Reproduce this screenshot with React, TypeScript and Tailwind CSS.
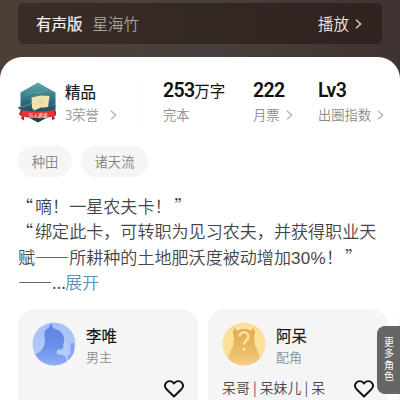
import type { ReactNode } from 'react';

function Chevron({ className = '' }: { className?: string }) {
  return (
    <svg viewBox="0 0 7 10" className={`h-[10px] w-[7px] shrink-0 ${className}`} fill="none" stroke="currentColor" strokeWidth="1.4">
      <path d="M1 .8 5.6 5 1 9.2" />
    </svg>
  );
}

function Heart() {
  return (
    <svg viewBox="0 0 20 18" className="h-[18px] w-5" fill="none" stroke="#111" strokeWidth="1.9" strokeLinejoin="round">
      <path d="M10 16.5 2.6 9.2C.8 7.2.6 4.6 2.1 2.8c2-2.4 5.9-2.2 7.9.7 2-2.9 5.9-3.1 7.9-.7 1.5 1.8 1.3 4.4-.5 6.4Z" />
    </svg>
  );
}

function Badge() {
  return (
    <svg viewBox="0 0 38 42" className="h-[42px] w-[38px] shrink-0">
      <defs>
        <linearGradient id="badge" x1="0" y1="0" x2="0" y2="1">
          <stop offset="0" stopColor="#62a7ae" />
          <stop offset=".5" stopColor="#286b7c" />
          <stop offset="1" stopColor="#123846" />
        </linearGradient>
      </defs>
      <path d="M20 .5 37.500 10.500v20.500L20 40.500 2.500 31V10.500Z" fill="url(#badge)" />
      <path d="M9 13c7-5 11 0 21-5M1 24c6 3 9-4 15-2M25 26c5-3 8 0 12-4" fill="none" stroke="#6ba5aa" strokeWidth=".8" />
      <path d="m13.500 15.500 9-2 9 .5-1.500 11-7 .5-7 3-2-3Z" fill="#efe2ad" />
      <path d="m19 22 3-3 2 1-1 2 3-1" fill="none" stroke="#d3c286" strokeWidth=".7" />
      <path d="M0 25l10 1-2 3-7-2M29 25l9-2-2 4" fill="#23586a" />
      <path d="m2 29.500 4-1v10l-3-2 1-2-3-2Zm36 0-4-1v10l3-2-1-2 3-2Z" fill="#b91f28" />
      <path d="M3.500 28Q20 31 36.500 28V34.500Q20 38 3.500 34.500Z" fill="#e63338" />
      <text x="20" y="34.500" textAnchor="middle" fontSize="4.800" fontWeight="700" fill="#ffd2c2">万人追读</text>
    </svg>
  );
}

function LeadAvatar() {
  return (
    <svg viewBox="0 0 44 44" className="size-11 shrink-0">
      <defs>
        <clipPath id="leadClip"><circle cx="22" cy="22" r="21.500" /></clipPath>
        <linearGradient id="leadBg" x1="0" y1="0" x2="0" y2="1"><stop stopColor="#a6bff5" /><stop offset="1" stopColor="#bdcefb" /></linearGradient>
        <linearGradient id="leadBody" gradientUnits="userSpaceOnUse" x1="0" y1="2" x2="0" y2="44"><stop stopColor="#5b83de" /><stop offset=".55" stopColor="#6990ea" /><stop offset="1" stopColor="#90aff7" /></linearGradient>
      </defs>
      <g clipPath="url(#leadClip)">
        <path d="M0 0h44v44H0Z" fill="url(#leadBg)" />
        <path d="M38.500 21H42v23h-6V33h2.500Z" fill="#81a2f0" />
        <path d="M13.500 8 17 5.500l2-4.500 2 5 6 2.500c3 2 5 5 5 8.500v4l-1 1 .5 3-2 2.500h-4l-1 2.500.5 2c3 1 6 1 8 2 2 2 2 6 2 10H0V33l6-2c5-3 7-8 7-13-1-4-1-7 .5-10Z" fill="url(#leadBody)" />
      </g>
    </svg>
  );
}

function SupportAvatar() {
  return (
    <svg viewBox="0 0 44 44" className="size-11 shrink-0">
      <defs>
        <clipPath id="supportClip"><circle cx="22" cy="22" r="21.500" /></clipPath>
        <linearGradient id="supportBody" x1="0" y1="0" x2="0" y2="1"><stop stopColor="#e2ac4e" /><stop offset=".55" stopColor="#e9b964" /><stop offset="1" stopColor="#f4ce87" /></linearGradient>
      </defs>
      <g clipPath="url(#supportClip)">
        <path d="M0 0h44v44H0Z" fill="#fbe09a" />
        <path d="M12 14c-2-3-1-6 1-8l2 3 4-2h6l4 2 2-3c2 2 3 5 1 8l1 10c3 5 5 9 5 14l-4 6H10l-4-6c0-5 3-9 5-14Z" fill="url(#supportBody)" />
      </g>
      <path d="M17.500 14.500c0-5.500 9-5.500 9 0 0 4-4.500 4-4.500 8" fill="none" stroke="#fbe4a8" strokeWidth="2.400" />
      <circle cx="22" cy="27" r="1.600" fill="#fbe4a8" />
    </svg>
  );
}

function Stat({ value, unit, label, arrow, className }: { value: string; unit?: string; label: string; arrow?: boolean; className: string }) {
  return (
    <div className={`flex shrink-0 flex-col ${className}`}>
      <div className="flex h-6 items-center whitespace-nowrap text-[#111]">
        <span className="font-['Roboto'] text-[19.500px] font-semibold tracking-[-0.700px]">{value}</span>
        {unit && <span className="text-[15.500px]">{unit}</span>}
      </div>
      <div className="flex h-6 items-center whitespace-nowrap text-[13.300px] font-[350] text-[#8b8b8b]">
        {label}
        {arrow && <Chevron className="ml-[6px] text-[#b5b5b5]" />}
      </div>
    </div>
  );
}

function Character({ avatar, name, role, aliases }: { avatar: ReactNode; name: string; role: string; aliases?: string }) {
  return (
    <div className="flex h-[110px] w-[180px] shrink-0 flex-col rounded-[16px] bg-[#f5f5f5] px-[14px] pt-[13px]">
      <div className="flex items-start">
        {avatar}
        <div className="ml-[10px] flex flex-col whitespace-nowrap pt-[3px]">
          <span className="h-[21px] text-[15.500px] leading-[21px] text-[#171717] [-webkit-text-stroke:0.2px]">{name}</span>
          <span className="h-[21px] text-[13px] leading-[21px] font-[350] text-[#8e8e8e]">{role}</span>
        </div>
      </div>
      <div className="mt-[8px] flex h-6 items-center justify-between text-[13.900px] font-[350] text-[#444]">
        <span className="whitespace-nowrap">{aliases}</span>
        <span className="mt-[3px] shrink-0"><Heart /></span>
      </div>
    </div>
  );
}

export default function App() {
  return (
    <main lang="zh-CN" className="relative flex h-[400px] w-[400px] flex-col overflow-hidden bg-linear-to-r from-[#4d3f36] via-[#48403e] to-[#3e332f] font-['Noto_Sans_CJK_SC',sans-serif]">
      <header className="mx-[18px] mt-[3px] flex h-[41px] shrink-0 items-center rounded-[5px] bg-linear-to-r from-[#382d28] to-[#30231f] pr-[20px] pl-[18px] text-[15.500px] whitespace-nowrap">
        <span className="text-[#f3f1ef] [-webkit-text-stroke:0.2px]">有声版</span>
        <span className="ml-[10px] font-[350] text-[#aaa49f]">星海竹</span>
        <span className="ml-auto font-[350] text-[#eeeae7]">播放</span>
        <Chevron className="ml-[6px] text-[#d8d2ce]" />
      </header>

      <section className="mt-[13px] flex h-[343px] shrink-0 flex-col rounded-t-[22px] bg-white">
        <div className="flex h-[89px] shrink-0 items-start pt-[22px] pl-[18px]">
          <div className="mt-[3px]"><Badge /></div>
          <div className="ml-[9px] flex w-[76px] shrink-0 flex-col">
            <span className="h-6 text-[15.500px] leading-6 text-[#171717] [-webkit-text-stroke:0.2px]">精品</span>
            <span className="flex h-6 items-center text-[13.300px] font-[350] text-[#959595]">3荣誉<Chevron className="ml-[11px] text-[#b5b5b5]" /></span>
          </div>
          <div className="mt-[-1px] h-[46px] w-px bg-[#f8f8f8]" />
          <Stat className="ml-[21px] w-[90px]" value="253" unit="万字" label="完本" />
          <Stat className="w-[65px]" value="222" label="月票" arrow />
          <Stat className="w-[75px]" value="Lv3" label="出圈指数" arrow />
        </div>

        <div className="flex shrink-0 gap-[9px] pl-[18px] text-[13.300px] font-[350] text-[#808080]">
          <span className="flex h-[31px] w-[54px] items-center justify-center rounded-full bg-[#f5f5f5]">种田</span>
          <span className="flex h-[31px] w-[67px] items-center justify-center rounded-full bg-[#f5f5f5]">诸天流</span>
        </div>

        <div className="mt-[16px] shrink-0 pl-[18px] text-[17.070px] leading-[25.300px] font-[350] whitespace-nowrap text-[#454545]">
          <p className="h-[25.300px]"><span className="mr-[2px] -ml-[2px]">“</span>嘀！一星农夫卡！<span className="ml-[3px]">”</span></p>
          <p className="h-[25.300px]"><span className="mr-[2px] -ml-[2px]">“</span>绑定此卡，可转职为见习农夫，并获得职业天</p>
          <p className="h-[25.300px]">赋——所耕种的土地肥沃度被动增加<span className="font-['Liberation_Sans'] leading-none tracking-[0.300px]">30%</span>！<span className="ml-[2px]">”</span></p>
          <p className="h-[25.300px]">——...<span className="-ml-px text-[#5b91bd]">展开</span></p>
        </div>

        <div className="mt-[15px] flex shrink-0 gap-[10px] overflow-hidden pl-[18px]">
          <Character avatar={<LeadAvatar />} name="李唯" role="男主" />
          <Character avatar={<SupportAvatar />} name="阿呆" role="配角" aliases="呆哥 | 呆妹儿 | 呆" />
          <div className="h-[110px] w-10 shrink-0 rounded-l-[16px] bg-[#f5f5f5]" />
        </div>
      </section>

      <aside className="absolute top-[326px] right-0 flex h-[68px] w-[23px] items-center justify-center rounded-l-[8px] bg-[#666] text-[10px] leading-[14px] tracking-[1.400px] text-white [writing-mode:vertical-rl]">
        更多角色
      </aside>
    </main>
  );
}
